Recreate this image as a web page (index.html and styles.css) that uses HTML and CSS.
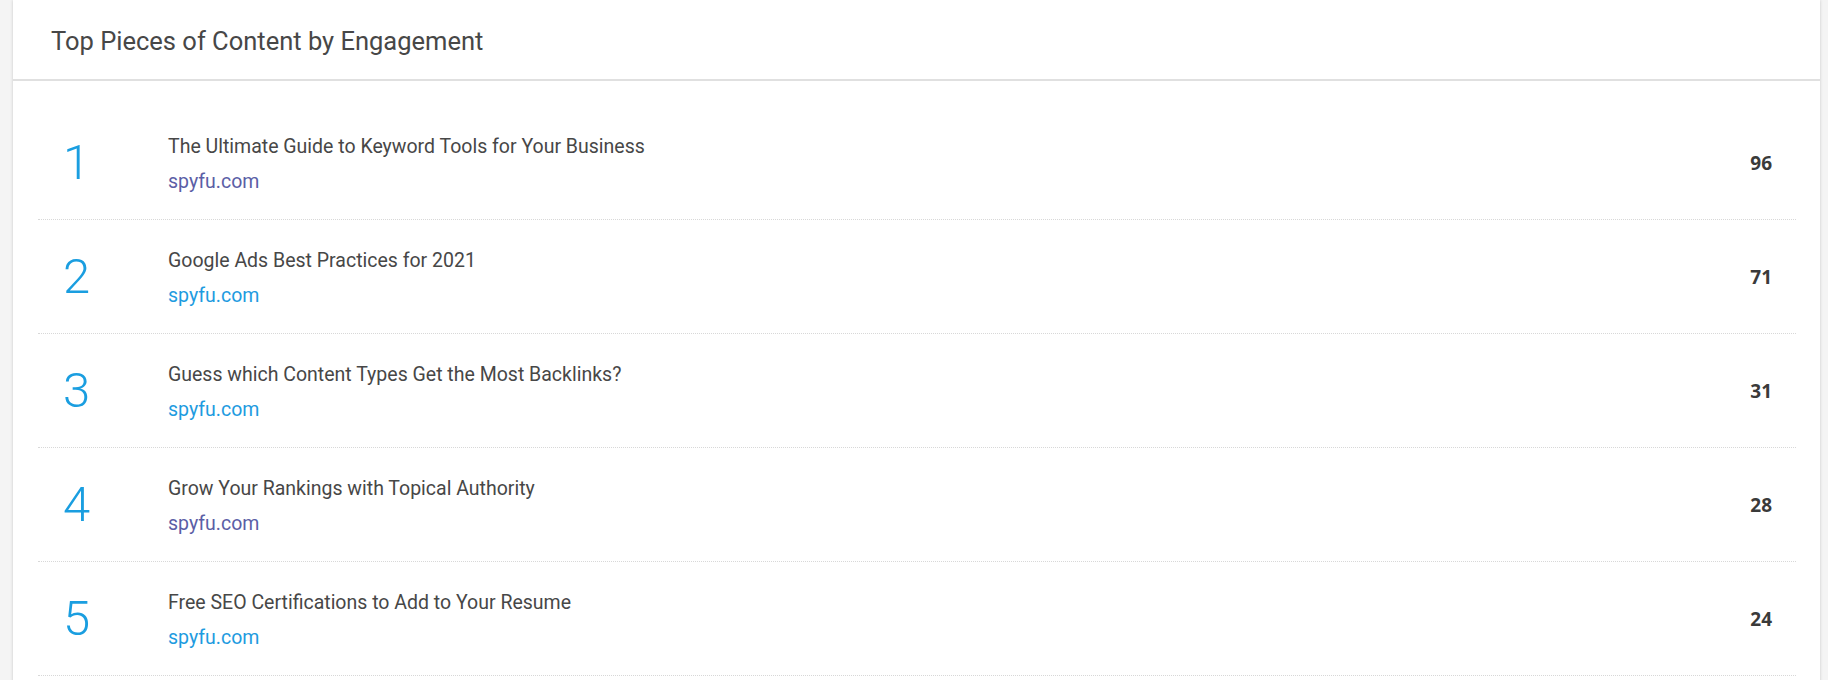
FILE: index.html
```html
<!DOCTYPE html>
<html>
<head>
<meta charset="utf-8">
<link rel="stylesheet" href="styles.css">
</head>
<body>
<div class="card">
  <div class="card-header">
    <h2 class="card-title">Top Pieces of Content by Engagement</h2>
  </div>
  <div class="card-body">
    <div class="row">
      <div class="rank">1</div>
      <div class="info">
        <div class="title">The Ultimate Guide to Keyword Tools for Your Business</div>
        <a class="domain visited" href="#">spyfu.com</a>
      </div>
      <div class="value">96</div>
    </div>
    <div class="row">
      <div class="rank">2</div>
      <div class="info">
        <div class="title">Google Ads Best Practices for 2021</div>
        <a class="domain" href="#">spyfu.com</a>
      </div>
      <div class="value">71</div>
    </div>
    <div class="row">
      <div class="rank">3</div>
      <div class="info">
        <div class="title">Guess which Content Types Get the Most Backlinks?</div>
        <a class="domain" href="#">spyfu.com</a>
      </div>
      <div class="value">31</div>
    </div>
    <div class="row">
      <div class="rank">4</div>
      <div class="info">
        <div class="title">Grow Your Rankings with Topical Authority</div>
        <a class="domain visited" href="#">spyfu.com</a>
      </div>
      <div class="value">28</div>
    </div>
    <div class="row">
      <div class="rank">5</div>
      <div class="info">
        <div class="title">Free SEO Certifications to Add to Your Resume</div>
        <a class="domain" href="#">spyfu.com</a>
      </div>
      <div class="value">24</div>
    </div>
  </div>
</div>
</body>
</html>
```
FILE: styles.css
```css
html, body {
  margin: 0;
  padding: 0;
}
body {
  background: #f4f4f4;
  font-family: Roboto, "Liberation Sans", sans-serif;
  color: #444;
  overflow: hidden;
  height: 680px;
}
.card {
  margin-left: 13px;
  width: 1807px;
  background: #fff;
  box-shadow: 0 0 3px rgba(0, 0, 0, 0.18);
  min-height: 700px;
}
.card-header {
  height: 79px;
  border-bottom: 2px solid #e0e0e0;
  display: flex;
  align-items: center;
  padding-left: 38px;
}
.card-title {
  margin: 0;
  font-weight: 400;
  font-size: 25.5px;
  color: #474747;
  padding-top: 2px;
}
.card-body {
  padding: 25px 24px 0 25px;
}
.row {
  display: flex;
  align-items: center;
  height: 113px;
  border-bottom: 1px dotted #d8d8d8;
}
.rank {
  width: 130px;
  flex: none;
  box-sizing: border-box;
  padding-left: 25px;
  font-size: 49px;
  font-weight: 300;
  line-height: 1;
  color: #1a9ee0;
}
.info {
  flex: 1;
  display: flex;
  flex-direction: column;
  gap: 9px;
  padding-top: 3px;
}
.title {
  font-size: 19.5px;
  line-height: 26px;
  color: #474747;
}
.domain {
  font-size: 19.5px;
  line-height: 26px;
  color: #1e9be0;
  text-decoration: none;
  align-self: flex-start;
}
.domain.visited {
  color: #5b5ea6;
}
.value {
  padding-right: 24px;
  font-family: "Open Sans", sans-serif;
  font-weight: 700;
  font-size: 19px;
  color: #3a3a3a;
}
```
